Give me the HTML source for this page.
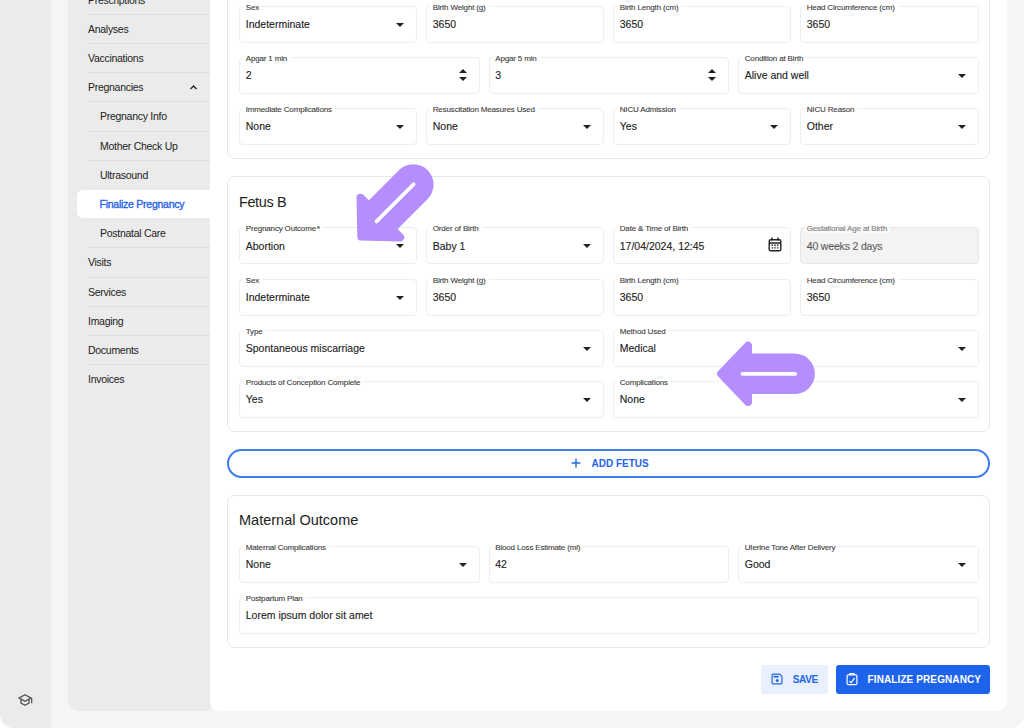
<!DOCTYPE html>
<html lang="en">
<head>
<meta charset="utf-8">
<title>Finalize Pregnancy</title>
<style>
html,body{margin:0;padding:0;background:#fff;}
body{width:1024px;height:728px;overflow:hidden;position:relative;font-family:"Liberation Sans",Arial,sans-serif;color:#222;}
#app{position:absolute;left:0;top:0;width:1024px;height:728px;background:#f5f5f5;border-radius:0 0 14px 14px;overflow:hidden;}
#rail{position:absolute;left:0;top:0;width:51px;height:728px;background:#ebebeb;}
#side{position:absolute;left:68px;top:0;width:143px;height:711px;background:#ebebeb;border-radius:0 0 0 10px;}
#main{position:absolute;left:211px;top:0;width:796px;height:711px;background:#fff;border-radius:0 0 10px 10px;box-shadow:-1px 0 0 #fff;}
/* sidebar */
.nav{position:absolute;left:20px;right:0;height:28.200px;border-bottom:1px solid #dcdcdc;font-size:10.5px;line-height:28.200px;white-space:nowrap;color:#222;letter-spacing:-.28px;}
.nav.sub span{padding-left:12px;}
.nav.sel{left:9px;border-bottom:none;height:28px;line-height:28px;background:#fff;border-radius:6px 0 0 6px;color:#2563eb;-webkit-text-stroke:.35px #2563eb;letter-spacing:-.25px;}
.nav.sel span{padding-left:22.5px;}
.nav.last{border-bottom:none;}
/* cards */
.card{position:absolute;left:16px;width:761px;border:1px solid #e3e8ed;border-radius:8px;background:#fff;}
.h{position:absolute;left:28px;font-size:14.5px;line-height:18px;color:#222;white-space:nowrap;}
.f{position:absolute;height:35px;border:1px solid #eeeeee;border-radius:4px;background:#fff;}
.f label{position:absolute;left:2.750px;top:-4px;padding:0 3px;background:#fff;font-size:8px;line-height:10px;color:#3a3a3a;white-space:nowrap;letter-spacing:-.16px;-webkit-text-stroke:.1px #3a3a3a;}
.f .v{position:absolute;left:5.750px;top:11.300px;font-size:10.5px;line-height:12px;color:#222;white-space:nowrap;-webkit-text-stroke:.12px #222;}
.f.dis{background:#f3f3f3;border-color:#e6e6e6;}
.f.dis label{color:#8a8a8a;-webkit-text-stroke:.2px #8a8a8a;background:#fafafa;top:-4.300px;line-height:9px;}
.f.dis .v{color:#6b6b6b;letter-spacing:-.17px;}
.f .dd{position:absolute;right:12px;top:16px;width:0;height:0;border-left:4px solid transparent;border-right:4px solid transparent;border-top:4px solid #222;}
.f .sp{position:absolute;right:12px;top:11px;width:8px;height:12px;}
.c1{left:28px;width:176px}.c2{left:215px;width:176px}.c3{left:402px;width:176px}.c4{left:589px;width:177px}
.t1{left:28px;width:238.5px}.t2{left:277.5px;width:238.5px}.t3{left:527px;width:239px}
.h1{left:28px;width:363px}.h2{left:402px;width:364px}
.w{left:28px;width:738px}
.btn{position:absolute;height:29px;border-radius:3px;font-size:10px;font-weight:bold;line-height:29px;white-space:nowrap;}

#add{position:absolute;left:16px;top:449px;width:759px;height:25px;border:2px solid #3d7cee;border-radius:15px;color:#2563eb;font-size:10px;font-weight:bold;line-height:25px;white-space:nowrap;letter-spacing:0;}
#add .plus{position:absolute;left:342px;top:7.300px;width:10px;height:10px;}
#add .t{position:absolute;left:362.500px;top:.300px;}
#save{left:550px;top:665px;width:67px;background:#e8f0fe;color:#2563eb;}
#fin{left:625px;top:665px;width:154px;background:#1e63ec;color:#fff;}
.btn svg{position:absolute;left:10px;top:8.500px;}
.btn span{position:absolute;left:31.700px;top:-.300px;letter-spacing:-.3px;}
#fin span{left:31.600px;letter-spacing:.100px;}
</style>
</head>
<body>
<div id="app">
<div id="rail">
<svg style="position:absolute;left:17.400px;top:692px" width="16" height="16" viewBox="0 0 24 24"><path fill="#555" d="M12 3 1 9l4 2.18v6L12 21l7-3.82v-6l2-1.09V17h2V9L12 3zm6.820 6L12 12.720 5.180 9 12 5.280 18.820 9zM17 15.990l-5 2.730-5-2.730v-3.720L12 15l5-2.730v3.720z"/></svg>
</div>
<div id="side">
<div class="nav" style="top:-14.4px"><span>Prescriptions</span></div>
<div class="nav" style="top:14.8px"><span>Analyses</span></div>
<div class="nav" style="top:44.0px"><span>Vaccinations</span></div>
<div class="nav" style="top:73.2px"><span>Pregnancies</span><svg style="position:absolute;left:101px;top:10px" width="9" height="8" viewBox="0 0 9 8"><path d="M1.500 5.900 4.500 3 7.500 5.900" fill="none" stroke="#222" stroke-width="1.400"/></svg></div>
<div class="nav sub" style="top:102.4px"><span>Pregnancy Info</span></div>
<div class="nav sub" style="top:131.6px"><span>Mother Check Up</span></div>
<div class="nav sub last" style="top:160.8px"><span>Ultrasound</span></div>
<div class="nav sel" style="top:190.0px"><span>Finalize Pregnancy</span></div>
<div class="nav sub" style="top:219.2px"><span>Postnatal Care</span></div>
<div class="nav" style="top:248.4px"><span>Visits</span></div>
<div class="nav" style="top:277.6px"><span>Services</span></div>
<div class="nav" style="top:306.8px"><span>Imaging</span></div>
<div class="nav" style="top:336.0px"><span>Documents</span></div>
<div class="nav last" style="top:365.2px"><span>Invoices</span></div>
</div>
<div id="main">
<!-- card 1 (Fetus A, cut off at top) -->
<div class="card" style="top:-60px;height:217px"></div>
<div class="f c1" style="top:6px"><label>Sex</label><div class="v">Indeterminate</div><i class="dd"></i></div>
<div class="f c2" style="top:6px"><label>Birth Weight (g)</label><div class="v">3650</div></div>
<div class="f c3" style="top:6px"><label>Birth Length (cm)</label><div class="v">3650</div></div>
<div class="f c4" style="top:6px"><label>Head Circumference (cm)</label><div class="v">3650</div></div>

<div class="f t1" style="top:57px"><label>Apgar 1 min</label><div class="v">2</div><svg class="sp" viewBox="0 0 8 12"><path d="M0 4 4 0l4 4zM0 8l4 4 4-4z" fill="#222"/></svg></div>
<div class="f t2" style="top:57px"><label>Apgar 5 min</label><div class="v">3</div><svg class="sp" viewBox="0 0 8 12"><path d="M0 4 4 0l4 4zM0 8l4 4 4-4z" fill="#222"/></svg></div>
<div class="f t3" style="top:57px"><label>Condition at Birth</label><div class="v">Alive and well</div><i class="dd"></i></div>

<div class="f c1" style="top:108px"><label>Immediate Complications</label><div class="v">None</div><i class="dd"></i></div>
<div class="f c2" style="top:108px"><label>Resuscitation Measures Used</label><div class="v">None</div><i class="dd"></i></div>
<div class="f c3" style="top:108px"><label>NICU Admission</label><div class="v">Yes</div><i class="dd"></i></div>
<div class="f c4" style="top:108px"><label>NICU Reason</label><div class="v">Other</div><i class="dd"></i></div>

<!-- card 2 (Fetus B) -->
<div class="card" style="top:176px;height:254px"></div>
<div class="h" style="top:193px;letter-spacing:-.4px">Fetus B</div>
<div class="f c1" style="top:227.450px"><label>Pregnancy Outcome<span style="letter-spacing:-1.400px"> </span>*</label><div class="v">Abortion</div><i class="dd"></i></div>
<div class="f c2" style="top:227.450px"><label>Order of Birth</label><div class="v">Baby 1</div><i class="dd"></i></div>
<div class="f c3" style="top:227.450px"><label>Date &amp; Time of Birth</label><div class="v">17/04/2024, 12:45</div>
<svg style="position:absolute;right:8.500px;top:9px" width="14" height="15" viewBox="0 0 14 15"><rect x="1.200" y="2.700" width="11.600" height="11.100" rx="1.600" fill="none" stroke="#222" stroke-width="1.400"/><path d="M1.200 5.900h11.600M4 .600v3M10 .600v3" stroke="#222" stroke-width="1.500" fill="none"/><path d="M3.600 8.200h1.500M6.250 8.200h1.500M8.900 8.200h1.500M3.600 10.900h1.500M6.250 10.900h1.500M8.900 10.900h1.500" stroke="#222" stroke-width="1.400"/></svg></div>
<div class="f c4 dis" style="top:227.450px"><label>Gestational Age at Birth</label><div class="v">40 weeks 2 days</div></div>

<div class="f c1" style="top:278.950px"><label>Sex</label><div class="v">Indeterminate</div><i class="dd"></i></div>
<div class="f c2" style="top:278.950px"><label>Birth Weight (g)</label><div class="v">3650</div></div>
<div class="f c3" style="top:278.950px"><label>Birth Length (cm)</label><div class="v">3650</div></div>
<div class="f c4" style="top:278.950px"><label>Head Circumference (cm)</label><div class="v">3650</div></div>

<div class="f h1" style="top:330.200px"><label>Type</label><div class="v">Spontaneous miscarriage</div><i class="dd"></i></div>
<div class="f h2" style="top:330.200px"><label>Method Used</label><div class="v">Medical</div><i class="dd"></i></div>
<div class="f h1" style="top:381px"><label>Products of Conception Complete</label><div class="v">Yes</div><i class="dd"></i></div>
<div class="f h2" style="top:381px"><label>Complications</label><div class="v">None</div><i class="dd"></i></div>

<!-- add fetus -->
<div id="add"><svg class="plus" viewBox="0 0 10 10"><path d="M5 .600v8.800M.600 5h8.800" stroke="#2563eb" stroke-width="1.400" fill="none"/></svg><span class="t">ADD FETUS</span></div>

<!-- card 3 (Maternal Outcome) -->
<div class="card" style="top:495px;height:151px"></div>
<div class="h" style="top:511px">Maternal Outcome</div>
<div class="f t1" style="top:546px"><label>Maternal Complications</label><div class="v">None</div><i class="dd"></i></div>
<div class="f t2" style="top:546px"><label>Blood Loss Estimate (ml)</label><div class="v">42</div></div>
<div class="f t3" style="top:546px"><label>Uterine Tone After Delivery</label><div class="v">Good</div><i class="dd"></i></div>
<div class="f w" style="top:597px"><label>Postpartum Plan</label><div class="v">Lorem ipsum dolor sit amet</div></div>

<!-- buttons -->
<div class="btn" id="save"><svg width="12" height="12" viewBox="0 0 12 12" style="left:10.400px;top:8.100px"><path d="M1.900 1.100H8.700L10.900 3.300V10.100A.800.800 0 0 1 10.100 10.900H1.900A.800.800 0 0 1 1.100 10.100V1.900A.800.800 0 0 1 1.900 1.100z" fill="none" stroke="#2563eb" stroke-width="1.200"/><rect x="2.600" y="2.800" width="5.200" height="1.700" fill="#2563eb"/><circle cx="6.200" cy="7.600" r="1.500" fill="#2563eb"/></svg><span>SAVE</span></div>
<div class="btn" id="fin"><svg width="12" height="13" viewBox="0 0 12 13" style="left:9.800px;top:7.600px"><rect x="1.100" y="1.900" width="9.800" height="9.700" rx="1.200" fill="none" stroke="#fff" stroke-width="1.200"/><path d="M3.600 1.900V1.200a.600.600 0 0 1 .600-.600h3.600a.600.600 0 0 1 .600.600v.700" fill="none" stroke="#fff" stroke-width="1.100"/><path d="M3.300 8.300 5.100 9.700 8.600 5.200" fill="none" stroke="#fff" stroke-width="1.300"/></svg><span>FINALIZE PREGNANCY</span></div>

<!-- annotation arrows -->
<svg id="arrows" width="796" height="711" viewBox="211 0 796 711" style="position:absolute;left:0;top:0;pointer-events:none">
<defs><g id="arw"><path d="M0 -20.300H-46.600V20.300H0A20.300 20.300 0 0 0 0 -20.300z" fill="#b48efc"/><path d="M-73.500 0-46.600-28.100V28.100z" fill="#b48efc" stroke="#b48efc" stroke-width="8" stroke-linejoin="round"/><path d="M.5 0H-52" stroke="#fff" stroke-width="3.800" stroke-linecap="round" fill="none"/></g></defs>
<use href="#arw" transform="translate(413.300 184.600) rotate(-45)"/>
<use href="#arw" transform="translate(794.600 373.800)"/>
</svg>

</div>
</div>
</body>
</html>
